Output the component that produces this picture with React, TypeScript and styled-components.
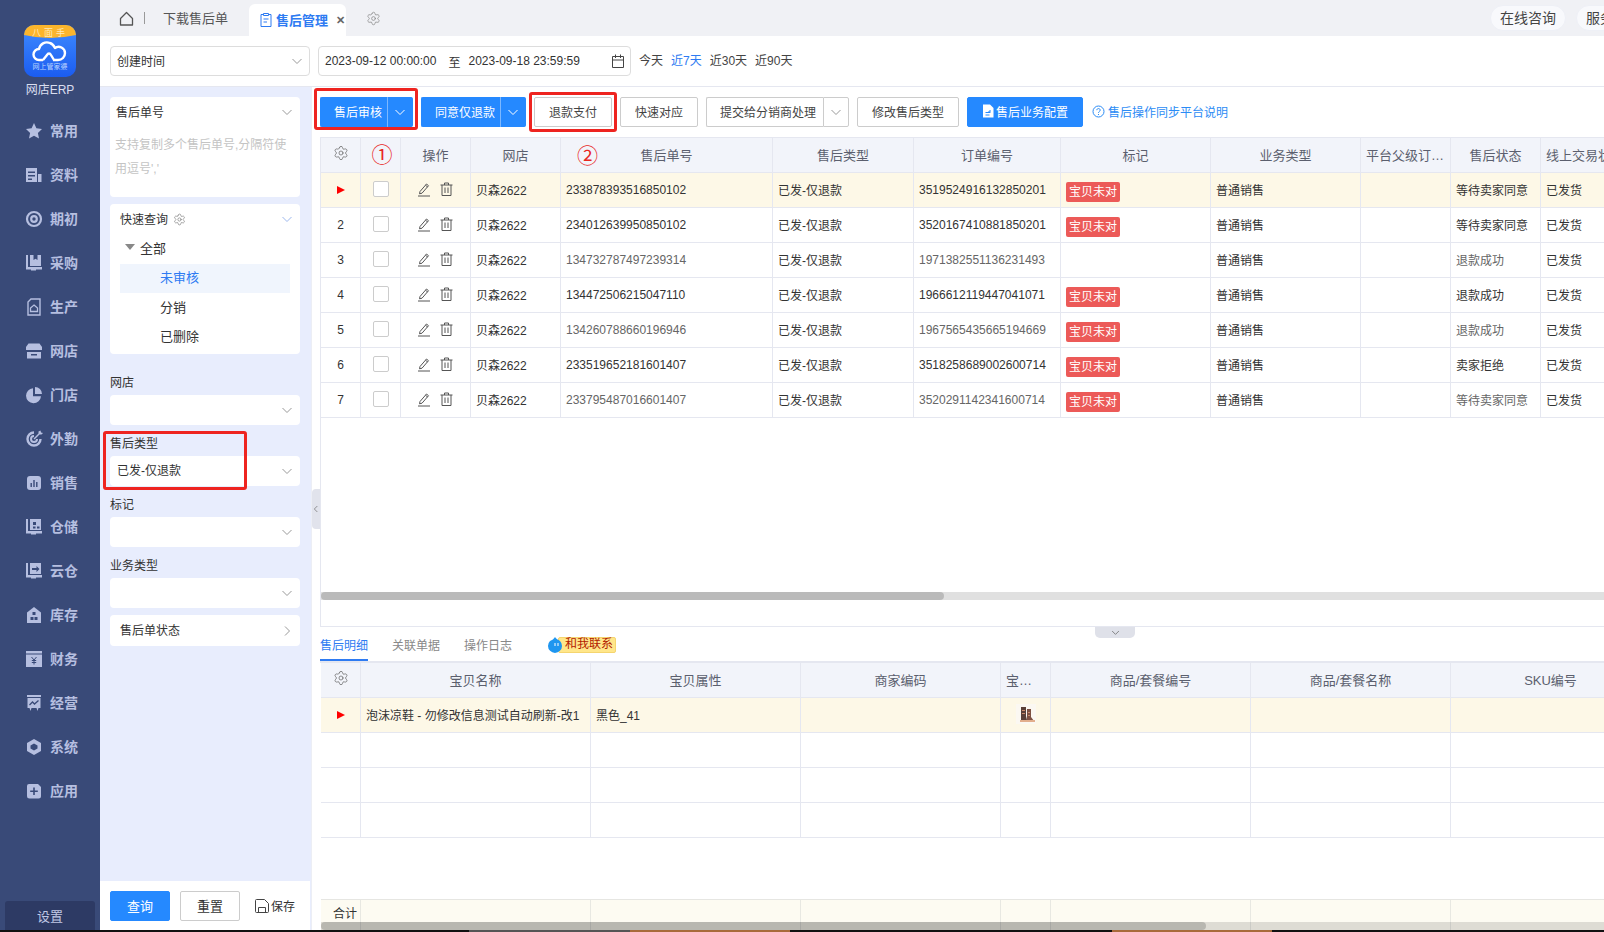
import React from 'react';
import styled, { createGlobalStyle } from 'styled-components';
import { Settings } from 'lucide-react';

const Global = createGlobalStyle`
  * { box-sizing: border-box; }
  html, body { margin: 0; padding: 0; background: #fff; overflow: hidden; }
  body {
    font-family: "Liberation Sans", "Noto Sans CJK SC", sans-serif;
    font-size: 12px;
    color: #333;
  }
`;

const BLUE = '#2589ff';
const LINK = '#2e7bf2';
const LINE = '#e5e7f0';
const NAVY = '#394a78';
const RED = '#ee2420';

const Page = styled.div`
  width: 1604px;
  height: 932px;
  display: flex;
  flex-direction: column;
  overflow: hidden;
`;

const Frame = styled.div`
  flex: 1;
  min-height: 0;
  display: flex;
`;

const Strip = styled.div`
  height: 2px;
  display: flex;
  background: #111;
`;

const StripPart = styled.div<{ $w: number; $c: string }>`
  width: ${p => p.$w}px;
  background: ${p => p.$c};
`;

// lifts CJK labels a little inside centred rows, the chevrons next to them stay put
const Raised = styled.span<{ $by?: number }>`
  padding-bottom: ${p => p.$by || 2}px;
`;

/* ---------- sidebar ---------- */
const Side = styled.aside`
  width: 100px;
  flex: none;
  background: ${NAVY};
  display: flex;
  flex-direction: column;
  padding-top: 25px;
`;

const LogoBox = styled.div`
  display: flex;
  flex-direction: column;
  align-items: center;
  margin-bottom: 11px;
`;

const LogoName = styled.div`
  margin-top: 5px;
  line-height: 16px;
  font-size: 12px;
  color: #d9deef;
`;

const NavItem = styled.div`
  height: 44px;
  display: flex;
  align-items: center;
  gap: 7px;
  padding-left: 25px;
  font-size: 14px;
  font-weight: 700;
  color: #b6bfe0;
`;

const NavIcon = styled.svg`
  width: 18px;
  height: 18px;
  flex: none;
  fill: currentColor;
`;

const SideFoot = styled.div`
  margin: auto 5px 0;
  height: 29px;
  background: #2d3a64;
  border-radius: 3px 3px 0 0;
  color: #c0c8e4;
  font-size: 13px;
  display: flex;
  align-items: center;
  justify-content: center;
`;

const navIcons: [string, React.ReactNode][] = [
  ['常用', <path d="M9 1l2.4 5.3 5.6.7-4.1 3.9 1.1 5.7L9 13.8l-5 2.8 1.1-5.7L1 7l5.6-.7z" />],
  ['资料', <>
    <path d="M1 2h11v14H1z" />
    <path d="M13 8h3.500v8H13z" />
    <path d="M3 5.500h7v1.500H3zM3 9h7v1.500H3zM3 12.500h4V14H3z" fill={NAVY} />
  </>],
  ['期初', <>
    <circle cx="9" cy="9" r="7" fill="none" stroke="currentColor" strokeWidth="2.200" />
    <circle cx="9" cy="9" r="2.800" fill="none" stroke="currentColor" strokeWidth="2.200" />
  </>],
  ['采购', <>
    <path d="M5 1h11v11H5z" />
    <path d="M8.500 1h4v5l-2-1.200-2 1.200z" fill={NAVY} />
    <path d="M1 1h2v12h14v2.500H11v1H6v-1H1z" />
  </>],
  ['生产', <>
    <path d="M6 1h9v16H3V4z" fill="none" stroke="currentColor" strokeWidth="1.400" />
    <path d="M9 7l3.500 3v3.500h-7V10z" fill="none" stroke="currentColor" strokeWidth="1.300" />
  </>],
  ['网店', <>
    <path d="M3.500 1.500h11L17 5v3H1V5z" />
    <path d="M2 10h14v6.500H2z" />
    <path d="M6 12h6v1.500H6z" fill={NAVY} />
  </>],
  ['门店', <>
    <path d="M8 2.200a7.500 7.500 0 1 0 8 8H8z" />
    <path d="M10 1a7 7 0 0 1 7 7h-7z" />
  </>],
  ['外勤', <>
    <path d="M9 2.500a6.500 6.500 0 1 0 6.500 6.500" fill="none" stroke="currentColor" strokeWidth="2.400" />
    <path d="M9 6a3 3 0 1 0 3 3" fill="none" stroke="currentColor" strokeWidth="2" />
    <path d="M8.500 8.500l5-5V1.500l2-1 .5 2 2 .5-1.500 1.500h-2l-5 5z" />
  </>],
  ['销售', <>
    <rect x="2" y="2" width="14" height="14" rx="3" />
    <path d="M5.500 9h1.400v4H5.500zM8.300 6h1.400v7H8.300zM11.100 8h1.400v5h-1.400z" fill={NAVY} />
  </>],
  ['仓储', <>
    <path d="M5 1h11v11H5z" />
    <path d="M8 4v3h3V4zM8 8.500v2h2.500v-2zM12 8.500v2h2.500v-2z" fill={NAVY} />
    <path d="M1 1h2v12h14v2.500H11v1H6v-1H1z" />
  </>],
  ['云仓', <>
    <path d="M5 1h11v11H5z" />
    <path d="M7 6h4.500V4l3 3-3 3V8H7z" fill={NAVY} />
    <path d="M1 1h2v12h14v2.500H11v1H6v-1H1z" />
  </>],
  ['库存', <>
    <path d="M9 1l7 5.500V17H2V6.500z" />
    <path d="M7.500 6h3v3h-3zM5.500 11h3v3h-3zM9.500 11h3v3h-3z" fill={NAVY} />
  </>],
  ['财务', <>
    <path d="M1 1h16v2.500H1z" />
    <path d="M1 4.500h16V17H1z" />
    <path d="M6.500 7L9 10l2.500-3M6.800 10.500h4.400M6.800 12.500h4.400M9 10v4.500" fill="none" stroke={NAVY} strokeWidth="1" />
  </>],
  ['经营', <>
    <path d="M2 1h14v2H2z" />
    <path d="M2.500 4h13v10h-2l-1 3-1-3h-5l-1 3-1-3h-2z" />
    <path d="M4.500 11l3-3 2 2 4-3.500" fill="none" stroke={NAVY} strokeWidth="1.300" />
  </>],
  ['系统', <>
    <path fillRule="evenodd" d="M9 1l7 4v8l-7 4-7-4V5zM9 5.500L5.500 7.500v3L9 12.500l3.500-2v-3z" />
  </>],
  ['应用', <>
    <path d="M4 2h9l3 3v9a2.500 2.500 0 0 1-2.500 2.500h-9A2.500 2.500 0 0 1 2 14V4a2 2 0 0 1 2-2z" />
    <path d="M8.200 5.500h1.600v3h3v1.600h-3v3H8.200v-3h-3V8.500h3z" fill={NAVY} />
  </>],
];

const Logo = () => (
  <svg width="52" height="52" viewBox="0 0 52 52">
    <defs>
      <linearGradient id="lg" x1="0" y1="0" x2="0" y2="1">
        <stop offset="0" stopColor="#3f8cff" />
        <stop offset="1" stopColor="#1b5cf0" />
      </linearGradient>
    </defs>
    <rect width="52" height="52" rx="10" fill="url(#lg)" />
    <path d="M0 10A10 10 0 0 1 10 0h32a10 10 0 0 1 10 10q-26 6-52 0z" fill="#fbb52c" />
    <text x="26" y="11" textAnchor="middle" fontSize="9" fill="#ffe9b8" letterSpacing="3">八面手</text>
    <path d="M19 35h-4a5.500 5.500 0 0 1 0-11c1-5 6-8 11-6 3 1 4 3 5 5 4-3 10 0 10 5 0 4-3 7-7 7h-5M19 35l4-5c1-2 3-2 4 0l3 5" fill="none" stroke="#fff" strokeWidth="2.400" strokeLinejoin="round" />
    <text x="26" y="44" textAnchor="middle" fontSize="7" fill="#bcd4ff">网上管家婆</text>
  </svg>
);

/* ---------- top bars ---------- */
const Content = styled.div`
  flex: 1;
  min-width: 0;
  display: flex;
  flex-direction: column;
`;

const TopBar = styled.div`
  height: 36px;
  flex: none;
  background: #f0f1f5;
  display: flex;
  align-items: flex-end;
  padding-left: 19px;
  font-size: 13px;
  overflow: hidden;
`;

const TopItem = styled.div`
  height: 36px;
  display: flex;
  align-items: center;
  flex: none;
  color: #555;
`;

const Sep = styled.span`
  width: 1px;
  height: 12px;
  background: #999;
  margin: 0 18px 0 10px;
`;

const ActiveTab = styled.div`
  height: 32px;
  width: 97px;
  flex: none;
  margin-left: 21px;
  padding-left: 11px;
  display: flex;
  align-items: center;
  gap: 4px;
  background: #fff;
  border-radius: 6px 6px 0 0;
  color: ${LINK};
  font-weight: 700;
  white-space: nowrap;
`;

const CloseX = styled.span`
  margin-left: 4px;
  color: #666;
  font-size: 11px;
  font-weight: 700;
`;

const TabGear = styled(TopItem)`
  margin-left: 20px;
  color: #888;
`;

const Pills = styled.div`
  margin-left: auto;
  height: 36px;
  display: flex;
  align-items: center;
  gap: 10px;
  flex: none;
  width: 114px;
`;

const Pill = styled.div`
  height: 26px;
  padding: 0 9px 2px;
  flex: none;
  border-radius: 13px;
  background: #f8f9fc;
  border: 1px solid #eef0f6;
  display: flex;
  align-items: center;
  font-size: 14px;
  color: #444;
`;

const FilterBar = styled.div`
  height: 51px;
  flex: none;
  border-bottom: 1px solid ${LINE};
  padding: 10px 0 0 10px;
  display: flex;
  align-items: flex-start;
  gap: 8px;
`;

const TimeSelect = styled.div`
  width: 200px;
  height: 30px;
  border: 1px solid #ddd;
  border-radius: 4px;
  padding: 0 6px;
  display: flex;
  align-items: center;
  justify-content: space-between;
`;

const DateBox = styled.div`
  width: 313px;
  height: 30px;
  border: 1px solid #ddd;
  border-radius: 4px;
  padding: 0 5px 0 6px;
  display: flex;
  align-items: center;
`;

const DateTo = styled.span`
  margin: 0 8px 0 12px;
`;

const DateIcon = styled.svg`
  margin-left: auto;
  width: 14px;
  height: 14px;
`;

const Quick = styled.div`
  height: 30px;
  padding-bottom: 3px;
  display: flex;
  align-items: center;
  gap: 8px;
`;

const QuickLink = styled.span<{ $on?: boolean }>`
  color: ${p => (p.$on ? LINK : '#444')};
`;

const Chev = styled.svg<{ $dir?: 'right' | 'left'; $size?: number }>`
  width: ${p => p.$size || 12}px;
  height: ${p => p.$size || 12}px;
  flex: none;
  fill: none;
  stroke: currentColor;
  stroke-width: 1;
  transform: rotate(${p => (p.$dir === 'right' ? -90 : p.$dir === 'left' ? 90 : 0)}deg);
`;

const Chevron = (p: { dir?: 'right' | 'left'; size?: number }) => (
  <Chev $dir={p.dir} $size={p.size} viewBox="0 0 12 12"><path d="M1.500 4l4.500 4.500L10.500 4" /></Chev>
);

const Muted = styled.span<{ $c?: string }>`
  display: flex;
  color: ${p => p.$c || '#999'};
`;

/* ---------- left panel ---------- */
const Body = styled.div`
  flex: 1;
  min-height: 0;
  display: flex;
`;

const Panel = styled.div`
  width: 211px;
  flex: none;
  background: #e8edfd;
  display: flex;
  flex-direction: column;
`;

const PanelScroll = styled.div`
  flex: 1;
  min-height: 0;
  padding: 10px 11px 0 10px;
`;

const Card = styled.div<{ $top?: number; $bottom?: number }>`
  background: #fff;
  border-radius: 4px;
  margin-top: ${p => p.$top || 0}px;
  padding-bottom: ${p => p.$bottom || 0}px;
`;

const CardHead = styled.div<{ $pad?: number }>`
  height: 30px;
  padding: 0 7px 0 ${p => p.$pad || 6}px;
  display: flex;
  align-items: center;
  justify-content: space-between;
`;

const HeadLeft = styled.span`
  display: flex;
  align-items: center;
  gap: 5px;
`;

const Hint = styled.div`
  padding: 6px 5px 0;
  height: 70px;
  line-height: 24px;
  color: #c4c4c4;
`;

const TreeRow = styled.div<{ $indent: number; $on?: boolean }>`
  height: 29.5px;
  margin: 0 10px;
  padding: 0 0 3px ${p => p.$indent}px;
  display: flex;
  align-items: center;
  gap: 5px;
  font-size: 13px;
  background: ${p => (p.$on ? '#f0f5fd' : 'transparent')};
  color: ${p => (p.$on ? LINK : '#333')};
`;

const TreeCaret = styled.span`
  width: 0;
  height: 0;
  border-left: 5px solid transparent;
  border-right: 5px solid transparent;
  border-top: 6px solid #888;
`;

const Fields = styled.div`
  margin-top: 18px;
  display: flex;
  flex-direction: column;
  gap: 8px;
`;

const Field = styled.div`
  position: relative;
`;

const FieldLabel = styled.div`
  height: 20px;
  line-height: 22px;
  margin-bottom: 3px;
`;

const FieldBox = styled.div`
  height: 30px;
  background: #fff;
  border-radius: 4px;
  padding: 0 7px;
  display: flex;
  align-items: center;
  justify-content: space-between;
`;

const StateCard = styled(FieldBox)`
  height: 31px;
  margin-top: 7px;
  padding-left: 10px;
`;

const PanelFoot = styled.div`
  height: 49px;
  flex: none;
  background: #fff;
  margin-right: 1px;
  padding: 10px 0 0 10px;
  display: flex;
  align-items: flex-start;
  gap: 10px;
`;

const FootBtn = styled.div<{ $primary?: boolean }>`
  width: 60px;
  height: 30px;
  padding-bottom: 2px;
  border-radius: 2px;
  display: flex;
  align-items: center;
  justify-content: center;
  font-size: 13px;
  background: ${p => (p.$primary ? BLUE : '#fff')};
  border: 1px solid ${p => (p.$primary ? BLUE : '#ccc')};
  color: ${p => (p.$primary ? '#fff' : '#333')};
`;

const SaveLink = styled.div`
  height: 30px;
  margin-left: 5px;
  display: flex;
  align-items: center;
  gap: 2px;
`;

const Mark = styled.div<{ $l: number; $r: number; $t: number; $b: number }>`
  position: absolute;
  left: ${p => p.$l}px;
  right: ${p => p.$r}px;
  top: ${p => p.$t}px;
  bottom: ${p => p.$b}px;
  border: 3px solid ${RED};
  border-radius: 3px;
  pointer-events: none;
`;

/* ---------- main ---------- */
const Main = styled.div`
  flex: 1;
  min-width: 0;
  position: relative;
  border-left: 1px solid #eceef5;
  padding-left: 8px;
  display: flex;
  flex-direction: column;
`;

const PanelHandle = styled.div`
  position: absolute;
  left: 0;
  top: 402px;
  width: 8px;
  height: 40px;
  background: #e1e3ec;
  border-radius: 4px 0 0 4px;
  display: flex;
  align-items: center;
  justify-content: center;
  color: #666;
`;

const Toolbar = styled.div`
  height: 50px;
  flex: none;
  padding-top: 10px;
  display: flex;
  align-items: flex-start;
  gap: 8px;
`;

const Anchored = styled.div`
  position: relative;
  display: flex;
`;

const Btn = styled.div<{ $primary?: boolean }>`
  height: 30px;
  padding: 0 14px 2px;
  border-radius: 2px;
  display: flex;
  align-items: center;
  gap: 2px;
  flex: none;
  background: ${p => (p.$primary ? BLUE : '#fff')};
  border: 1px solid ${p => (p.$primary ? BLUE : '#ccc')};
  color: ${p => (p.$primary ? '#fff' : '#444')};
`;

const SplitMain = styled(Btn)<{ $right?: number }>`
  padding: 0 ${p => p.$right || 5}px 2px 13px;
  border-radius: 2px 0 0 2px;
  border-right: 0;
`;

const SplitArrow = styled(Btn)`
  width: 26px;
  padding: 0;
  justify-content: center;
  border-radius: 0 2px 2px 0;
  border-left: 1px solid ${p => (p.$primary ? '#7db8ff' : '#ccc')};
  color: ${p => (p.$primary ? '#fff' : '#999')};
`;

const HelpLink = styled.div`
  height: 30px;
  padding-bottom: 2px;
  margin-left: 1px;
  display: flex;
  align-items: center;
  gap: 3px;
  color: #2b8bf5;
`;

const GridArea = styled.div`
  height: 490px;
  flex: none;
  border-left: 1px solid ${LINE};
  border-bottom: 1px solid ${LINE};
  display: flex;
  flex-direction: column;
`;

const GridClip = styled.div`
  flex: 1;
  min-height: 0;
  overflow: hidden;
`;

const Table = styled.table<{ $w: number; $flat?: boolean }>`
  width: ${p => p.$w}px;
  table-layout: fixed;
  border-collapse: separate;
  border-spacing: 0;
  border-top: ${p => (p.$flat ? 0 : `1px solid ${LINE}`)};
`;

const Th = styled.th<{ $left?: boolean }>`
  position: relative;
  height: 35px;
  padding: 0 5px 2px;
  background: #f2f4fa;
  border-right: 1px solid ${LINE};
  border-bottom: 1px solid ${LINE};
  font-size: 13px;
  font-weight: 400;
  color: #5b5f6e;
  text-align: ${p => (p.$left ? 'left' : 'center')};
  white-space: nowrap;
  overflow: hidden;
  text-overflow: ellipsis;
`;

const Td = styled.td<{ $soft?: boolean; $center?: boolean; $flush?: boolean }>`
  height: 35px;
  padding: ${p => (p.$flush ? '0 5px' : '0 5px 2px')};
  border-right: 1px solid ${LINE};
  border-bottom: 1px solid ${LINE};
  color: ${p => (p.$soft ? '#666' : '#333')};
  text-align: ${p => (p.$center ? 'center' : 'left')};
  white-space: nowrap;
  overflow: hidden;
`;

const Tr = styled.tr<{ $on?: boolean }>`
  background: ${p => (p.$on ? '#fdf8e7' : '#fff')};
`;

const CircleNo = styled.span`
  font-family: "Noto Sans CJK SC", sans-serif;
  font-size: 21px;
  line-height: 1;
  color: #e8271f;
`;

const CircleHead = styled(CircleNo)`
  margin-left: 3px;
`;

const CircleOver = styled(CircleNo)`
  position: absolute;
  left: 16px;
  top: 6px;
`;

const RowArrow = styled.span`
  display: inline-block;
  width: 0;
  height: 0;
  border-top: 4px solid transparent;
  border-bottom: 4px solid transparent;
  border-left: 8px solid #f00;
`;

const Check = styled.span`
  display: block;
  width: 16px;
  height: 16px;
  margin: 0 auto 2px;
  background: #fff;
  border: 1px solid #ccc;
  border-radius: 2px;
`;

const OpIcons = styled.div`
  display: flex;
  align-items: center;
  gap: 9px;
  padding: 0 0 2px 11px;
  color: #555;
`;

const Tag = styled.span`
  display: inline-block;
  width: 54px;
  height: 20px;
  margin-top: 4px;
  line-height: 20px;
  text-align: center;
  background: #ec5a58;
  border-radius: 2px;
  color: #fff;
`;

const Scroll = styled.div`
  height: 8px;
  background: rgba(0, 0, 0, 0.12);
`;

const UpperScroll = styled(Scroll)`
  flex: none;
  margin-bottom: 26px;
`;

const Thumb = styled.div<{ $w: number }>`
  width: ${p => p.$w}px;
  height: 100%;
  border-radius: 4px;
  background: rgba(0, 0, 0, 0.17);
`;

const Tabs = styled.div`
  position: relative;
  height: 36px;
  flex: none;
  border-bottom: 2px solid ${LINE};
  display: flex;
  align-items: flex-end;
  gap: 24px;
`;

const TabItem = styled.div<{ $on?: boolean }>`
  height: 33px;
  padding-top: 8px;
  color: ${p => (p.$on ? LINK : '#888')};
  border-bottom: 2px solid ${p => (p.$on ? LINK : 'transparent')};
`;

const Contact = styled.div`
  height: 33px;
  margin-left: 11px;
  display: flex;
  align-items: flex-start;
  padding-top: 9px;
`;

const Drop = styled.svg`
  position: relative;
  z-index: 1;
  flex: none;
`;

const ContactText = styled.span`
  height: 16px;
  margin-left: -5px;
  padding: 0 2px 0 6px;
  background: #ffe68a;
  border: 1px solid #f5d56f;
  border-radius: 2px;
  line-height: 13px;
  color: #b22000;
`;

const GridHandle = styled.div`
  position: absolute;
  left: 775px;
  top: 0;
  width: 40px;
  height: 11px;
  background: #dfe1e9;
  border-radius: 0 0 5px 5px;
  display: flex;
  align-items: center;
  justify-content: center;
  color: #666;
`;

const Detail = styled.div`
  flex: 1;
  min-height: 0;
  position: relative;
  padding-left: 1px;
  display: flex;
  flex-direction: column;
  overflow: hidden;
`;

const DetailRows = styled.div`
  flex: 1;
  min-height: 0;
`;

const DetailFoot = styled.div`
  position: relative;
  height: 31px;
  flex: none;
  display: flex;
  background: #fdfbf2;
  border-top: 1px solid #e6e6e2;
`;

const FootCell = styled.div<{ $w: number }>`
  width: ${p => p.$w}px;
  flex: none;
  border-right: 1px solid #e8e8e2;
  padding: 4px 0 0 12px;
`;

const FootScroll = styled(Scroll)`
  position: absolute;
  left: 0;
  right: 0;
  bottom: 0;
`;

/* ---------- data ---------- */
const orderCols = [40, 40, 70, 90, 212, 141, 147, 150, 150, 90, 90, 130];
const orderHeads = ['操作', '网店', '售后单号', '售后类型', '订单编号', '标记', '业务类型', '平台父级订单号', '售后状态'];

const orders = [
  { id: '233878393516850102', sn: '3519524916132850201', tag: true, state: '等待卖家同意', soft: false },
  { id: '234012639950850102', sn: '3520167410881850201', tag: true, state: '等待卖家同意', soft: false },
  { id: '134732787497239314', sn: '1971382551136231493', tag: false, state: '退款成功', soft: true },
  { id: '134472506215047110', sn: '1966612119447041071', tag: true, state: '退款成功', soft: false },
  { id: '134260788660196946', sn: '1967565435665194669', tag: true, state: '退款成功', soft: true },
  { id: '233519652181601407', sn: '3518258689002600714', tag: true, state: '卖家拒绝', soft: false },
  { id: '233795487016601407', sn: '3520291142341600714', tag: true, state: '等待卖家同意', soft: true },
];

const detailCols = [40, 230, 210, 200, 50, 200, 200, 200];
const detailHeads = ['宝贝名称', '宝贝属性', '商家编码', '宝贝图片', '商品/套餐编号', '商品/套餐名称', 'SKU编号'];

const sumOf = (a: number[]) => a.reduce((s, n) => s + n, 0);

const EditIcon = () => (
  <svg width="14" height="15" viewBox="0 0 14 15" fill="none" stroke="currentColor" strokeWidth="1">
    <path d="M3 9.500L9.500 2l2 1.700L5 11.200l-2.500.6zM8.500 3.200l2 1.700M1 14h12" />
  </svg>
);

const TrashIcon = () => (
  <svg width="13" height="15" viewBox="0 0 13 15" fill="none" stroke="currentColor" strokeWidth="1">
    <path d="M.500 3h12M4.500 3V1h4v2M2 3v10.500h9V3M5 5.500v5.500M8 5.500v5.500" />
  </svg>
);

const Shoe = () => (
  <svg width="20" height="20" viewBox="0 0 20 20">
    <rect width="20" height="20" fill="#fbf8f2" />
    <path d="M5 3h5v9l1 4H5z" fill="#5a4038" />
    <path d="M11 5h4v8l3 4h-7z" fill="#7d5143" />
    <path d="M6 6h3v1H6zM6 9h3v1H6zM12 8h2v1h-2zM12 11h2v1h-2z" fill="#c98a6c" />
    <path d="M4 16h15v2H4z" fill="#e2ae8c" />
  </svg>
);

const App: React.FC = () => {
  return <>
    <Global />
    <Page>
      <Frame>
        <Side>
          <LogoBox>
            <Logo />
            <LogoName>网店ERP</LogoName>
          </LogoBox>
          {navIcons.map(([name, icon]) => (
            <NavItem key={name}>
              <NavIcon viewBox="0 0 18 18">{icon}</NavIcon>
              <Raised>{name}</Raised>
            </NavItem>
          ))}
          <SideFoot>设置</SideFoot>
        </Side>

        <Content>
          <TopBar>
            <TopItem>
              <svg width="15" height="15" viewBox="0 0 15 15" fill="none" stroke="#555" strokeWidth="1.300">
                <path d="M1.500 7.500L7.500 1.500l6 6V14h-12z" strokeLinejoin="round" />
              </svg>
            </TopItem>
            <TopItem><Sep /><Raised>下载售后单</Raised></TopItem>
            <ActiveTab>
              <svg width="12" height="14" viewBox="0 0 12 14" fill="none" stroke={LINK} strokeWidth="1">
                <path d="M3.500 1.500H1v12h10v-12H8.500M3.500.500h5v2h-5zM3.500 6h5M3.500 9h3.500" />
              </svg>
              <Raised>售后管理</Raised>
              <CloseX>✕</CloseX>
            </ActiveTab>
            <TabGear><Settings size={15} strokeWidth={1.2} /></TabGear>
            <Pills>
              <Pill>在线咨询</Pill>
              <Pill>服务中心</Pill>
            </Pills>
          </TopBar>

          <FilterBar>
            <TimeSelect>
              <Raised>创建时间</Raised>
              <Muted><Chevron /></Muted>
            </TimeSelect>
            <DateBox>
              2023-09-12 00:00:00
              <DateTo>至</DateTo>
              2023-09-18 23:59:59
              <DateIcon viewBox="0 0 14 14" fill="none" stroke="#444" strokeWidth="1">
                <path d="M1.500 2.500h11v11h-11zM1.500 6h11M4.500.500v3.500M9.500.500v3.500" />
              </DateIcon>
            </DateBox>
            <Quick>
              <QuickLink>今天</QuickLink>
              <QuickLink $on>近7天</QuickLink>
              <QuickLink>近30天</QuickLink>
              <QuickLink>近90天</QuickLink>
            </Quick>
          </FilterBar>

          <Body>
            <Panel>
              <PanelScroll>
                <Card>
                  <CardHead><Raised>售后单号</Raised><Muted><Chevron /></Muted></CardHead>
                  <Hint>支持复制多个售后单号,分隔符使用逗号','</Hint>
                </Card>
                <Card $top={7} $bottom={2}>
                  <CardHead $pad={10}>
                    <HeadLeft><Raised>快速查询</Raised> <Muted $c="#777"><Settings size={13} strokeWidth={1.2} /></Muted></HeadLeft>
                    <Muted $c="#9db8ee"><Chevron /></Muted>
                  </CardHead>
                  <TreeRow $indent={5}><TreeCaret />全部</TreeRow>
                  <TreeRow $indent={40} $on>未审核</TreeRow>
                  <TreeRow $indent={40}>分销</TreeRow>
                  <TreeRow $indent={40}>已删除</TreeRow>
                </Card>
                <Fields>
                  <Field>
                    <FieldLabel>网店</FieldLabel>
                    <FieldBox><span /><Muted><Chevron /></Muted></FieldBox>
                  </Field>
                  <Field>
                    <FieldLabel>售后类型</FieldLabel>
                    <FieldBox><Raised $by={3}>已发-仅退款</Raised><Muted><Chevron /></Muted></FieldBox>
                    <Mark $l={-7} $r={53} $t={-2} $b={-4} />
                  </Field>
                  <Field>
                    <FieldLabel>标记</FieldLabel>
                    <FieldBox><span /><Muted><Chevron /></Muted></FieldBox>
                  </Field>
                  <Field>
                    <FieldLabel>业务类型</FieldLabel>
                    <FieldBox><span /><Muted><Chevron /></Muted></FieldBox>
                  </Field>
                </Fields>
                <StateCard><Raised $by={3}>售后单状态</Raised><Muted><Chevron dir="right" /></Muted></StateCard>
              </PanelScroll>
              <PanelFoot>
                <FootBtn $primary>查询</FootBtn>
                <FootBtn>重置</FootBtn>
                <SaveLink>
                  <svg width="14" height="14" viewBox="0 0 14 14" fill="none" stroke="#444" strokeWidth="1">
                    <path d="M.500 1.500a1 1 0 0 1 1-1h8l4 4v8a1 1 0 0 1-1 1h-11a1 1 0 0 1-1-1zM3.500 13.500v-5h7v5" />
                  </svg>
                  <Raised>保存</Raised>
                </SaveLink>
              </PanelFoot>
            </Panel>

            <Main>
              <PanelHandle><Chevron dir="left" size={8} /></PanelHandle>

              <Toolbar>
                <Anchored>
                  <SplitMain $primary>售后审核</SplitMain>
                  <SplitArrow $primary><Chevron /></SplitArrow>
                  <Mark $l={-6} $r={-5} $t={-9} $b={-3} />
                </Anchored>
                <Anchored>
                  <SplitMain $primary>同意仅退款</SplitMain>
                  <SplitArrow $primary><Chevron /></SplitArrow>
                </Anchored>
                <Anchored>
                  <Btn>退款支付</Btn>
                  <Mark $l={-5} $r={-5} $t={-5} $b={-5} />
                </Anchored>
                <Btn>快速对应</Btn>
                <Anchored>
                  <SplitMain $right={7}>提交给分销商处理</SplitMain>
                  <SplitArrow><Chevron /></SplitArrow>
                </Anchored>
                <Btn>修改售后类型</Btn>
                <Btn $primary>
                  <svg width="12" height="14" viewBox="0 0 12 14" fill="#fff">
                    <path d="M1 .500h7l3.500 3.500v9.500H1z" />
                    <path d="M3.500 8.500h4.500V6M8 8.500L6.500 7M3.500 11h4" fill="none" stroke={BLUE} strokeWidth="1" />
                  </svg>
                  售后业务配置
                </Btn>
                <HelpLink>
                  <svg width="13" height="13" viewBox="0 0 13 13" fill="none" stroke="#2b8bf5" strokeWidth="1">
                    <circle cx="6.500" cy="6.500" r="5.500" />
                    <path d="M4.800 5.200c0-2.200 3.400-2.200 3.400 0 0 1.300-1.700 1.300-1.700 2.600M6.500 9v1" />
                  </svg>
                  售后操作同步平台说明
                </HelpLink>
              </Toolbar>

              <GridArea>
                <GridClip>
                  <Table $w={sumOf(orderCols)}>
                    <colgroup>{orderCols.map((w, i) => <col key={i} width={w} />)}</colgroup>
                    <thead>
                      <tr>
                        <Th><Settings size={16} strokeWidth={1.1} color="#666" /></Th>
                        <Th><CircleHead>①</CircleHead></Th>
                        {orderHeads.map((h, i) => (
                          <Th key={h}>
                            {i === 2 && <CircleOver>②</CircleOver>}
                            {h}
                          </Th>
                        ))}
                        <Th $left>线上交易状态</Th>
                      </tr>
                    </thead>
                    <tbody>
                      {orders.map((o, i) => (
                        <Tr key={o.id} $on={i === 0}>
                          <Td $center $flush>{i === 0 ? <RowArrow /> : i + 1}</Td>
                          <Td $center $flush><Check /></Td>
                          <Td $flush><OpIcons><EditIcon /><TrashIcon /></OpIcons></Td>
                          <Td>贝森2622</Td>
                          <Td $flush $soft={o.soft}>{o.id}</Td>
                          <Td>已发-仅退款</Td>
                          <Td $flush $soft={o.soft}>{o.sn}</Td>
                          <Td $flush>{o.tag && <Tag>宝贝未对</Tag>}</Td>
                          <Td>普通销售</Td>
                          <Td />
                          <Td $soft={o.soft}>{o.state}</Td>
                          <Td>已发货</Td>
                        </Tr>
                      ))}
                    </tbody>
                  </Table>
                </GridClip>
                <UpperScroll><Thumb $w={623} /></UpperScroll>
              </GridArea>

              <Tabs>
                <TabItem $on>售后明细</TabItem>
                <TabItem>关联单据</TabItem>
                <TabItem>操作日志</TabItem>
                <Contact>
                  <Drop width="16" height="16" viewBox="0 0 16 16">
                    <path d="M8 0c1 2 3 2.500 5 4a7 7 0 1 1-10 0c2-1 4-2 5-4z" fill="#1e96f0" />
                    <path d="M8 6v3M11 6v3" stroke="#fff" strokeWidth="1" />
                  </Drop>
                  <ContactText>和我联系</ContactText>
                </Contact>
                <GridHandle><Chevron size={9} /></GridHandle>
              </Tabs>

              <Detail>
                <DetailRows>
                  <Table $w={sumOf(detailCols)} $flat>
                    <colgroup>{detailCols.map((w, i) => <col key={i} width={w} />)}</colgroup>
                    <thead>
                      <tr>
                        <Th><Settings size={16} strokeWidth={1.1} color="#666" /></Th>
                        {detailHeads.map(h => <Th key={h}>{h}</Th>)}
                      </tr>
                    </thead>
                    <tbody>
                      {[0, 1, 2, 3].map(r => (
                        <Tr key={r} $on={r === 0}>
                          <Td $center $flush>{r === 0 && <RowArrow />}</Td>
                          <Td>{r === 0 && '泡沫凉鞋 - 勿修改信息测试自动刷新-改1'}</Td>
                          <Td>{r === 0 && '黑色_41'}</Td>
                          <Td />
                          <Td $center $flush>{r === 0 && <Shoe />}</Td>
                          <Td />
                          <Td />
                          <Td />
                        </Tr>
                      ))}
                    </tbody>
                  </Table>
                </DetailRows>
                <DetailFoot>
                  {detailCols.map((w, i) => <FootCell key={i} $w={w}>{i === 0 && '合计'}</FootCell>)}
                  <FootScroll><Thumb $w={885} /></FootScroll>
                </DetailFoot>
              </Detail>
            </Main>
          </Body>
        </Content>
      </Frame>
      <Strip>
        <StripPart $w={469} $c="#111" />
        <StripPart $w={161} $c="#555" />
        <StripPart $w={160} $c="#a86a3a" />
        <StripPart $w={322} $c="#111" />
        <StripPart $w={160} $c="#a86a3a" />
      </Strip>
    </Page>
  </>
}

export default App;
